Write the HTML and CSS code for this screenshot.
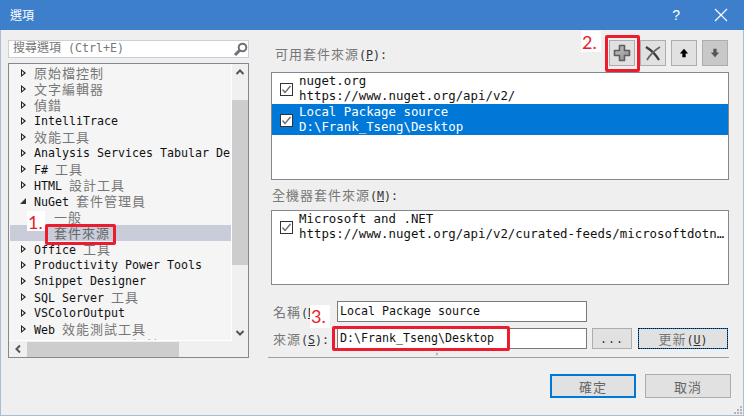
FILE: index.html
```html
<!DOCTYPE html>
<html lang="zh-Hant">
<head>
<meta charset="utf-8">
<title>選項</title>
<link rel="stylesheet" href="styles.css">
</head>
<body>
<div class="window">
  <header class="titlebar">
    <span class="title">選項</span>
    <span class="help">?</span>
    <svg class="close" width="14" height="14" viewBox="0 0 14 14"><path d="M1 1L13 13M13 1L1 13" stroke="#fff" stroke-width="1.2" fill="none"/></svg>
  </header>
  <div class="content">
    <aside class="left">
      <div class="search">
        <span class="placeholder"><span class="c">搜尋選項</span> (Ctrl+E)</span>
        <svg width="15" height="15" viewBox="0 0 15 15"><circle cx="9.5" cy="5.5" r="3.8" fill="none" stroke="#717171" stroke-width="2"/><path d="M7 8L2 13" stroke="#717171" stroke-width="3"/></svg>
      </div>
      <div class="tree">
        <div class="tree-list">
          <div class="row"><i class="tri"></i><span class="c">原始檔控制</span></div>
          <div class="row"><i class="tri"></i><span class="c">文字編輯器</span></div>
          <div class="row"><i class="tri"></i><span class="c">偵錯</span></div>
          <div class="row"><i class="tri"></i>IntelliTrace</div>
          <div class="row"><i class="tri"></i><span class="c">效能工具</span></div>
          <div class="row"><i class="tri"></i>Analysis Services Tabular De</div>
          <div class="row"><i class="tri"></i>F# <span class="c">工具</span></div>
          <div class="row"><i class="tri"></i>HTML <span class="c">設計工具</span></div>
          <div class="row"><i class="tri open"></i>NuGet <span class="c">套件管理員</span></div>
          <div class="row child"><span class="c">一般</span></div>
          <div class="row child selected"><span class="c">套件來源</span></div>
          <div class="row"><i class="tri"></i>Office <span class="c">工具</span></div>
          <div class="row"><i class="tri"></i>Productivity Power Tools</div>
          <div class="row"><i class="tri"></i>Snippet Designer</div>
          <div class="row"><i class="tri"></i>SQL Server <span class="c">工具</span></div>
          <div class="row"><i class="tri"></i>VSColorOutput</div>
          <div class="row"><i class="tri"></i>Web <span class="c">效能測試工具</span></div>
          <div class="row"><i class="tri"></i>Windows Forms <span class="c">設計工具</span></div>
        </div>
        <div class="vscroll">
          <svg class="chev" width="16" height="16" viewBox="0 0 16 16"><path d="M4.5 10L8 6.5L11.5 10" fill="none" stroke="#555" stroke-width="2"/></svg>
          <div class="vthumb"></div>
          <svg class="chev bottom" width="16" height="16" viewBox="0 0 16 16"><path d="M4.5 6L8 9.5L11.5 6" fill="none" stroke="#555" stroke-width="2"/></svg>
        </div>
        <div class="hscroll">
          <svg class="chev" width="18" height="16" viewBox="0 0 18 16"><path d="M11 4.5L7.5 8L11 11.5" fill="none" stroke="#555" stroke-width="2"/></svg>
          <div class="hthumb"></div>
          <svg class="chev right" width="16" height="16" viewBox="0 0 16 16"><path d="M6 4.5L9.5 8L6 11.5" fill="none" stroke="#555" stroke-width="2"/></svg>
        </div>
        <div class="corner"></div>
      </div>
    </aside>
    <main class="right">
      <div class="sources-head">
        <label class="head-label"><span class="c">可用套件來源</span>(<u>P</u>):</label>
        <div class="tools">
          <button class="tool">
            <svg width="20" height="20" viewBox="0 0 20 20"><defs><linearGradient id="plusfill" x1="0" y1="0" x2="1" y2="1"><stop offset="0" stop-color="#c4c4c4"/><stop offset="1" stop-color="#8c8c8c"/></linearGradient></defs><path d="M7.5 2.5h5v5h5v5h-5v5h-5v-5h-5v-5h5z" fill="url(#plusfill)" stroke="#5e5e5e" stroke-width="1.6" stroke-linejoin="round"/></svg>
          </button>
          <button class="tool">
            <svg width="20" height="20" viewBox="0 0 20 20"><path d="M3 4C8 7 13 12 16 17" fill="none" stroke="#3c3c3c" stroke-width="2.4"/><path d="M17 4C12 7 7 12 4 17" fill="none" stroke="#666" stroke-width="1.8"/></svg>
          </button>
          <button class="tool">
            <svg width="10" height="10" viewBox="0 0 12 12"><path d="M6 1L11 6.5H8V11H4V6.5H1z" fill="#000"/></svg>
          </button>
          <button class="tool off">
            <svg width="10" height="10" viewBox="0 0 12 12"><path d="M6 11L11 5.5H8V1H4V5.5H1z" fill="#555"/></svg>
          </button>
        </div>
      </div>
      <div class="list user-list">
        <div class="item">
          <svg class="check" width="13" height="13" viewBox="0 0 13 13"><rect x=".5" y=".5" width="12" height="12" fill="#fff" stroke="#333"/><path d="M2.5 6.5L5 9.5L10.5 3" fill="none" stroke="#666" stroke-width="1.3"/></svg>
          <div class="item-text">nuget.org<br>https://www.nuget.org/api/v2/</div>
        </div>
        <div class="item active">
          <svg class="check" width="13" height="13" viewBox="0 0 13 13"><rect x=".5" y=".5" width="12" height="12" fill="#fff" stroke="#333"/><path d="M2.5 6.5L5 9.5L10.5 3" fill="none" stroke="#666" stroke-width="1.3"/></svg>
          <div class="item-text">Local Package source<br>D:\Frank_Tseng\Desktop</div>
        </div>
      </div>
      <div class="machine-label"><span class="c">全機器套件來源</span>(<u>M</u>):</div>
      <div class="list machine-list">
        <div class="item">
          <svg class="check" width="13" height="13" viewBox="0 0 13 13"><rect x=".5" y=".5" width="12" height="12" fill="#fff" stroke="#333"/><path d="M2.5 6.5L5 9.5L10.5 3" fill="none" stroke="#666" stroke-width="1.3"/></svg>
          <div class="item-text">Microsoft and .NET<br>https://www.nuget.org/api/v2/curated-feeds/microsoftdotn…</div>
        </div>
      </div>
      <div class="form">
        <div class="form-row">
          <span class="form-label"><span class="c">名稱</span>(<u>N</u>):</span>
          <div class="input">Local Package source</div>
        </div>
        <div class="form-row">
          <span class="form-label"><span class="c">來源</span>(<u>S</u>):</span>
          <div class="input">D:\Frank_Tseng\Desktop</div>
          <button class="btn browse">...</button>
          <button class="btn update"><span class="c">更新</span>(<u>U</u>)</button>
        </div>
      </div>
      <div class="sep"></div>
      <div class="footer">
        <button class="btn big ok"><span class="c">確定</span></button>
        <button class="btn big"><span class="c">取消</span></button>
      </div>
    </main>
  </div>
  <svg class="grip" width="10" height="10" viewBox="0 0 10 10"><path d="M7 1h2v2H7zM4 4h2v2H4zM7 4h2v2H7zM1 7h2v2H1zM4 7h2v2H4zM7 7h2v2H7z" fill="#b4b4b4"/></svg>

  <div class="note n1">1.</div>
  <div class="note n2">2.</div>
  <div class="note n3">3.</div>
  <div class="mark m1"></div>
  <div class="mark m2"></div>
  <div class="mark m3"></div>
</div>
</body>
</html>
```
FILE: styles.css
```css
* { box-sizing: border-box; }
html, body { margin: 0; padding: 0; }
body {
  width: 744px;
  height: 416px;
  overflow: hidden;
  font-family: "DejaVu Sans Mono", "Noto Sans CJK TC", monospace;
  font-size: 11.63px;
  color: #111;
}
.c {
  font-family: "Noto Sans CJK TC", sans-serif;
  font-size: 13px;
  letter-spacing: 1px;
  color: #777;
}
u { text-decoration: underline; }
.window {
  position: relative;
  width: 744px;
  height: 416px;
  background: #efefef;
  border: 1px solid #a9bdd8;
  border-top: 0;
  display: flex;
  flex-direction: column;
}
.titlebar {
  height: 30px;
  margin: 0 -1px;
  padding: 0 16px 1px 10px;
  background: #3d7fca;
  color: #fff;
  display: flex;
  align-items: center;
  flex: none;
}
.title {
  font-family: "Noto Sans CJK TC", sans-serif;
  font-size: 12px;
  flex: 1;
}
.help { font-family: "Liberation Sans", sans-serif; font-size: 14px; margin-right: 34px; }
.content { display: flex; flex: 1; min-height: 0; }
.left {
  width: 241px;
  margin-left: 7px;
  padding-top: 10px;
  flex: none;
}
.search {
  height: 18px;
  background: #fff;
  border: 1px solid #ccceda;
  padding: 0 0 0 4px;
  display: flex;
  align-items: center;
  justify-content: space-between;
  margin-bottom: 5px;
}
.placeholder { color: #777; padding-bottom: 3px; line-height: 15px; }
.placeholder .c { color: #777; font-size: 12px; letter-spacing: 0; }
.tree {
  height: 295px;
  border: 1px solid #828790;
  background: #f5f5f5;
  display: grid;
  grid-template-columns: minmax(0, 1fr) 16px;
  grid-template-rows: 277px 16px;
}
.tree-list {
  overflow: hidden;
  padding-top: 1px;
  border-bottom: 1px solid #fff;
  border-right: 1px solid #fff;
  min-width: 0;
}
.row {
  height: 16px;
  line-height: 16px;
  padding-left: 25px;
  position: relative;
  white-space: nowrap;
  overflow: hidden;
}
.child { padding-left: 45px; }
.selected { background: #c9ccd9; margin-left: 1px; padding-left: 44px; }
.selected .c { color: #666; }
.tri {
  position: absolute;
  left: 12px;
  top: 4px;
  width: 0;
  height: 0;
  border-left: 5px solid #222;
  border-top: 4.5px solid transparent;
  border-bottom: 4.5px solid transparent;
}
.tri::after {
  content: "";
  position: absolute;
  left: -4px;
  top: -2.5px;
  width: 0;
  height: 0;
  border-left: 2.5px solid #f5f5f5;
  border-top: 2.5px solid transparent;
  border-bottom: 2.5px solid transparent;
}
.tri.open {
  left: 11px;
  top: 5px;
  border: 0;
  border-bottom: 6px solid #333;
  border-left: 6px solid transparent;
}
.tri.open::after { display: none; }
.vscroll {
  display: flex;
  flex-direction: column;
  background: #f0f0f0;
  align-items: center;
}
.vthumb {
  width: 16px;
  height: 165px;
  margin-top: 20px;
  background: #cdcdcd;
}
.chev { display: block; flex: none; }
.chev.bottom { margin-top: auto; }
.hscroll {
  display: flex;
  align-items: center;
  background: #f0f0f0;
  min-width: 0;
}
.hthumb { width: 152px; height: 15px; background: #cdcdcd; flex: none; }
.chev.right { margin-left: 29px; }
.corner { background: #f0f0f0; }

.right {
  width: 458px;
  margin-left: 22px;
  padding-top: 10px;
  flex: none;
}
.sources-head {
  height: 26px;
  display: flex;
  align-items: center;
  justify-content: space-between;
  padding: 0 1px 0 4px;
  margin-bottom: 6px;
  color: #333;
}
.head-label { display: block; }
.tools { display: flex; gap: 5px; }
.tool {
  width: 26px;
  height: 26px;
  padding: 0;
  background: #e1e1e1;
  border: 1px solid #adadad;
  display: flex;
  align-items: center;
  justify-content: center;
}
.tool.off { background: #c8c8c8; }
.list {
  background: #fff;
  border: 1px solid #828790;
  overflow: hidden;
}
.user-list { height: 108px; }
.machine-list { height: 75px; }
.item {
  height: 31px;
  display: flex;
  align-items: center;
  padding-left: 8px;
}
.check { flex: none; margin: 1px 6px 0 0; }
.item-text {
  font-size: 12.4px;
  line-height: 15px;
  white-space: nowrap;
  overflow: hidden;
  width: 428px;
  padding-bottom: 2px;
}
.active { background: #0078d7; color: #fff; }
.machine-label {
  height: 30px;
  line-height: 30px;
  padding-left: 1px;
  color: #333;
}
.form {
  margin-top: 16px;
  display: flex;
  flex-direction: column;
  gap: 6px;
}
.form-row { display: flex; align-items: center; height: 21px; }
.form-label { width: 66px; padding-left: 2px; color: #333; white-space: nowrap; flex: none; }
.input {
  width: 250px;
  height: 21px;
  line-height: 19px;
  background: #fff;
  border: 1px solid #7a7a7a;
  padding-left: 2px;
  flex: none;
}
.btn {
  font: inherit;
  color: #333;
  background: #e1e1e1;
  border: 1px solid #adadad;
  padding: 0;
  height: 21px;
  white-space: nowrap;
}
.browse { width: 40px; margin-left: 5px; letter-spacing: 1px; }
.update {
  width: 90px;
  margin-left: 6px;
  border: 1px solid #0078d7;
  outline: 1px dotted #111;
  outline-offset: -1px;
}
.sep { height: 1px; margin: 8px 0 0 -3px; background: #a0a0a0; }
.footer {
  display: flex;
  gap: 9px;
  justify-content: flex-end;
  margin: 16px -2px 0 0;
}
.big { width: 86px; height: 24px; }
.big .c { color: #666; }
.ok { border: 2px solid #0078d7; }
.grip { position: absolute; right: 0; bottom: 0; }

.note {
  position: absolute;
  background: #fff;
  color: #e8202e;
  font-family: "Lato", sans-serif;
  font-size: 18px;
  padding-left: 1px;
}
.n1 { left: 26px; top: 211px; width: 18px; height: 20px; line-height: 22px; }
.n2 { left: 580px; top: 31px; width: 20px; height: 21px; line-height: 23px; }
.n3 { left: 309px; top: 305px; width: 20px; height: 23px; line-height: 23px; }
.mark {
  position: absolute;
  border: 3px solid #ea1c2d;
  border-radius: 2px;
}
.m1 { left: 44px; top: 224px; width: 71px; height: 21px; }
.m2 { left: 604px; top: 35px; width: 35px; height: 37px; }
.m3 { left: 331px; top: 326px; width: 178px; height: 25px; }
```
